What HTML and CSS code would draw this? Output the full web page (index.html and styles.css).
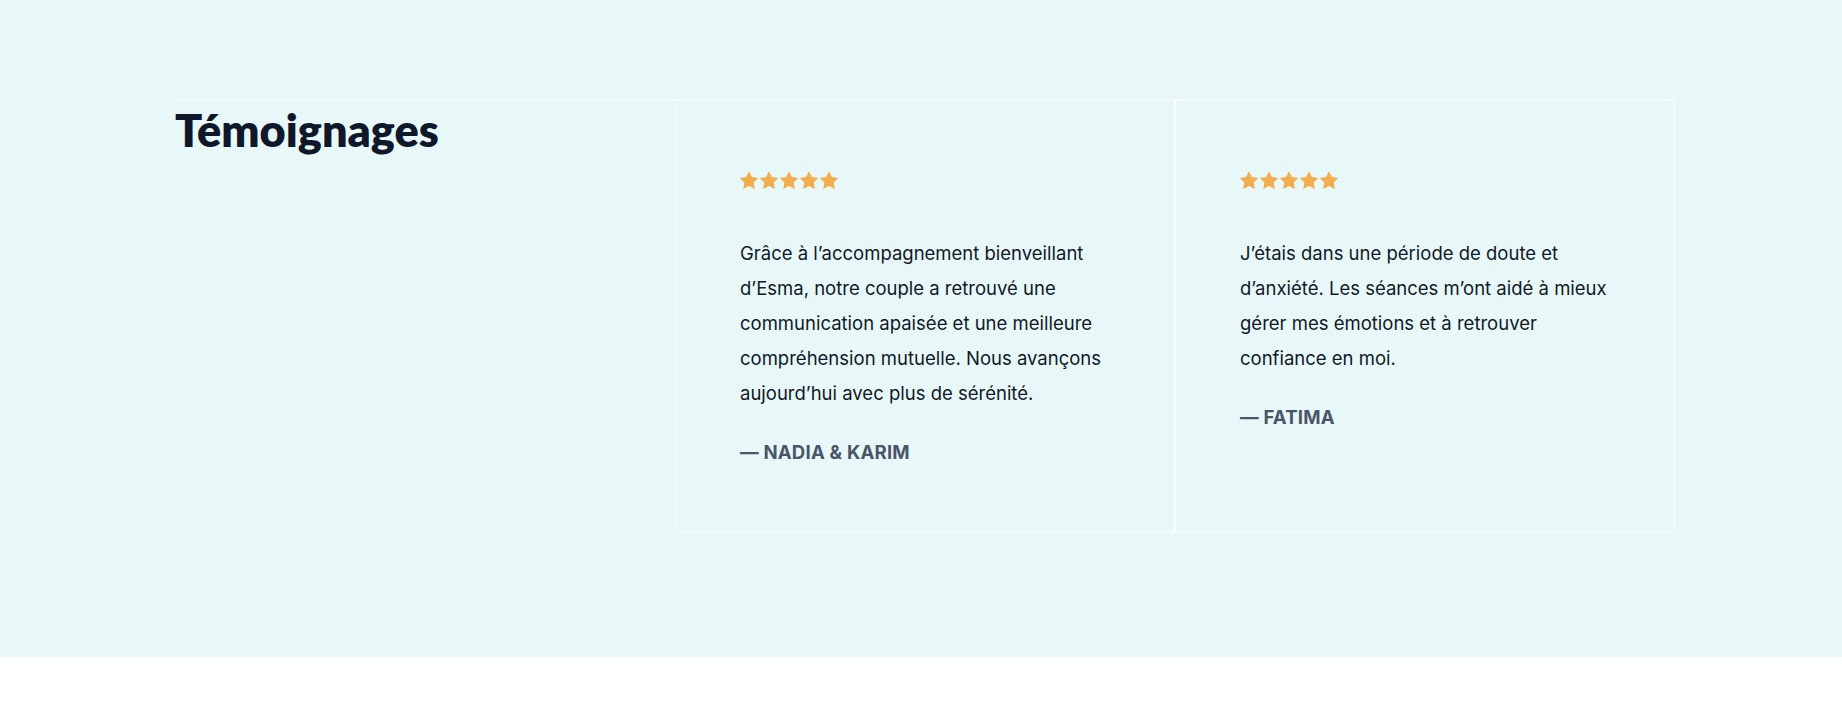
FILE: index.html
```html
<!DOCTYPE html>
<html lang="fr">
<head>
<meta charset="utf-8">
<title>Témoignages</title>
<link rel="stylesheet" href="styles.css">
</head>
<body>
<section class="testimonials">
  <div class="grid">
    <div class="intro">
      <h2 class="title">Témoignages</h2>
    </div>
    <article class="card">
      <div class="stars" aria-label="5 étoiles">
        <svg viewBox="0 0 20 19" class="star"><path d="M10 0.3l2.9 5.8 6.4.9-4.6 4.5 1.1 6.4L10 14.9l-5.8 3 1.1-6.4L.7 7l6.4-.9z"/></svg>
        <svg viewBox="0 0 20 19" class="star"><path d="M10 0.3l2.9 5.8 6.4.9-4.6 4.5 1.1 6.4L10 14.9l-5.8 3 1.1-6.4L.7 7l6.4-.9z"/></svg>
        <svg viewBox="0 0 20 19" class="star"><path d="M10 0.3l2.9 5.8 6.4.9-4.6 4.5 1.1 6.4L10 14.9l-5.8 3 1.1-6.4L.7 7l6.4-.9z"/></svg>
        <svg viewBox="0 0 20 19" class="star"><path d="M10 0.3l2.9 5.8 6.4.9-4.6 4.5 1.1 6.4L10 14.9l-5.8 3 1.1-6.4L.7 7l6.4-.9z"/></svg>
        <svg viewBox="0 0 20 19" class="star"><path d="M10 0.3l2.9 5.8 6.4.9-4.6 4.5 1.1 6.4L10 14.9l-5.8 3 1.1-6.4L.7 7l6.4-.9z"/></svg>
      </div>
      <p class="quote">Grâce à l’accompagnement bienveillant d’Esma, notre couple a retrouvé une communication apaisée et une meilleure compréhension mutuelle. Nous avançons aujourd’hui avec plus de sérénité.</p>
      <p class="author">— NADIA &amp; KARIM</p>
    </article>
    <article class="card">
      <div class="stars" aria-label="5 étoiles">
        <svg viewBox="0 0 20 19" class="star"><path d="M10 0.3l2.9 5.8 6.4.9-4.6 4.5 1.1 6.4L10 14.9l-5.8 3 1.1-6.4L.7 7l6.4-.9z"/></svg>
        <svg viewBox="0 0 20 19" class="star"><path d="M10 0.3l2.9 5.8 6.4.9-4.6 4.5 1.1 6.4L10 14.9l-5.8 3 1.1-6.4L.7 7l6.4-.9z"/></svg>
        <svg viewBox="0 0 20 19" class="star"><path d="M10 0.3l2.9 5.8 6.4.9-4.6 4.5 1.1 6.4L10 14.9l-5.8 3 1.1-6.4L.7 7l6.4-.9z"/></svg>
        <svg viewBox="0 0 20 19" class="star"><path d="M10 0.3l2.9 5.8 6.4.9-4.6 4.5 1.1 6.4L10 14.9l-5.8 3 1.1-6.4L.7 7l6.4-.9z"/></svg>
        <svg viewBox="0 0 20 19" class="star"><path d="M10 0.3l2.9 5.8 6.4.9-4.6 4.5 1.1 6.4L10 14.9l-5.8 3 1.1-6.4L.7 7l6.4-.9z"/></svg>
      </div>
      <p class="quote">J’étais dans une période de doute et d’anxiété. Les séances m’ont aidé à mieux gérer mes émotions et à retrouver confiance en moi.</p>
      <p class="author">— FATIMA</p>
    </article>
  </div>
</section>
</body>
</html>
```

FILE: styles.css
```css
* { box-sizing: border-box; }
html, body { margin: 0; padding: 0; background: #ffffff; }
body { font-family: Inter, "Noto Sans", sans-serif; }

.testimonials {
  background: #e8f8f8;
  padding: 99px 0 125px;
}

.grid {
  display: grid;
  grid-template-columns: 500px 500px 500px;
  width: 1500px;
  margin-left: 175px;
  border-top: 1px solid #ffffff;
}

.title {
  margin: 0;
  font-family: Lato, "Noto Sans", sans-serif;
  font-weight: 800;
  font-size: 45px;
  line-height: 60px;
  color: #0f172a;
  letter-spacing: 0;
}

.card {
  border: 1px solid #ffffff;
  border-top: 0;
  padding: 71px 60px 65px 64px;
}

.stars {
  display: flex;
  height: 19px;
  margin: 0 0 46px -1px;
}

.star {
  width: 20px;
  height: 19px;
  fill: #f2ae4e;
}

.quote {
  margin: 0;
  font-size: 18.5px;
  line-height: 35px;
  color: #111827;
}

.author {
  margin: 27px 0 0;
  font-size: 18.6px;
  line-height: 28px;
  font-weight: 700;
  color: #4a5568;
  letter-spacing: 0.2px;
}
```
